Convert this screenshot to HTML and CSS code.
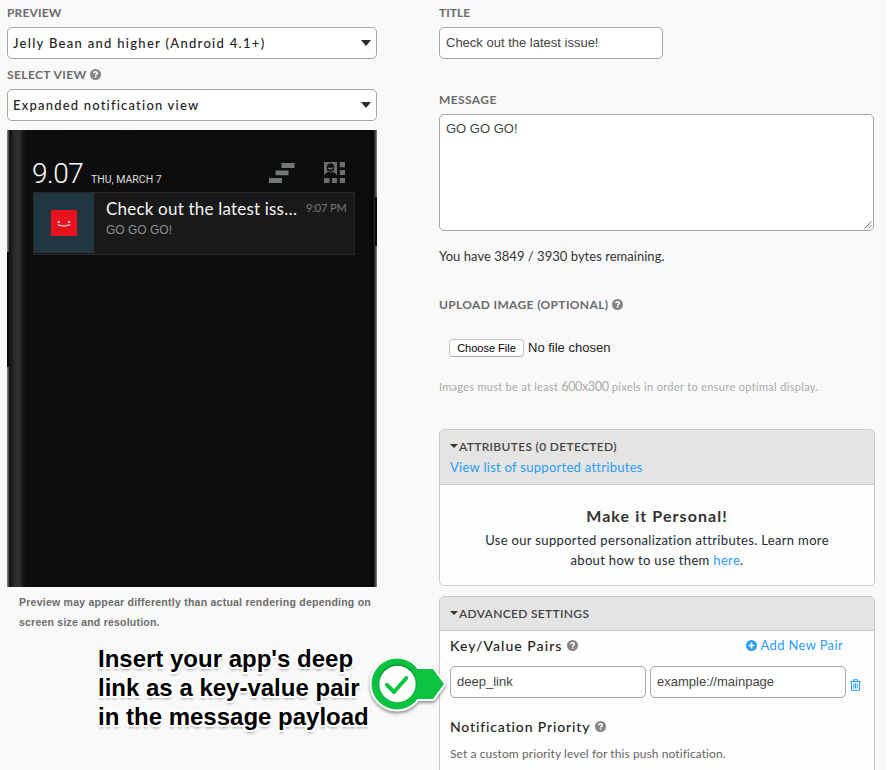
FILE: index.html
```
<!DOCTYPE html>
<html lang="en">
<head>
<meta charset="utf-8">
<title>Compose push notification</title>
<link rel="stylesheet" href="styles.css">
</head>
<body>
<svg class="sprite" aria-hidden="true">
  <symbol id="help" viewBox="0 0 12 12">
    <circle cx="6" cy="6" r="6" fill="#848484"/>
    <path d="M4 4.7C4.1 2.5 8 2.5 8 4.6C8 5.9 6.2 5.9 6.1 7.2" fill="none" stroke="#fff" stroke-width="1.6"/>
    <rect x="5.2" y="8" width="1.8" height="1.6" fill="#fff"/>
  </symbol>
</svg>
<main class="page">
  <section class="preview">
    <div class="label"><span class="t-preview">PREVIEW</span></div>
    <div class="select"><span class="t-jelly">Jelly Bean and higher (Android 4.1+)</span><i class="caret"></i></div>
    <div class="label label-view"><span class="t-view">SELECT VIEW</span><svg class="help"><use href="#help"/></svg></div>
    <div class="select"><span class="t-expanded">Expanded notification view</span><i class="caret"></i></div>
    <div class="phone">
      <i class="edge edge-left"></i><i class="edge edge-right"></i>
      <div class="status">
        <span class="clock">9.07</span>
        <span class="date">THU, MARCH 7</span>
        <svg class="clear" viewBox="0 0 26 20" fill="#757878"><path d="M12.5 0H25.5V5H12.5zM6.5 7.5H19.5V12.2H6.5zM0 15H13V20H0z"/></svg>
        <svg class="quick" viewBox="0 0 21 21">
          <path fill="#6b6e6e" d="M0 0H13V13H0zM15.8 0H21V5.3H15.8zM15.8 8H21V13H15.8zM0 16H5.5V21H0zM8 16H13V21H8zM15.8 16H21V21H15.8z"/>
          <path fill="#101010" d="M.8 13V11.8Q2.5 10.4 4.4 9.9Q2.6 8.2 2.8 5Q3.2 1.2 6.5 1.2Q9.8 1.2 10.2 5Q10.4 8.2 8.6 9.9Q10.5 10.4 12.2 11.8V13z"/>
          <path fill="#6b6e6e" d="M4 5.3Q6.5 6.6 9 5.3L8.8 7Q6.5 8.2 4.2 7zM4.3 8.8Q6.5 10.6 8.7 8.8V9.8Q6.5 11 4.3 9.8z"/>
        </svg>
      </div>
      <div class="notice">
        <div class="thumb">
          <svg class="smile" viewBox="0 0 26 26"><rect width="26" height="26" fill="#e8121c"/><circle cx="7.7" cy="12" r="1.1" fill="#fff"/><circle cx="18" cy="12" r="1.1" fill="#fff"/><path d="M6.7 14.8Q13 17.6 19 14.8" fill="none" stroke="#fff" stroke-width="1"/></svg>
        </div>
        <div class="notice-text">
          <div class="notice-title"><span class="t-ntitle">Check out the latest iss…</span></div>
          <div class="notice-body"><span class="t-nbody">GO GO GO!</span></div>
        </div>
        <span class="time">9:07 PM</span>
      </div>
    </div>
    <p class="note"><span class="t-note1">Preview may appear differently than actual rendering depending on</span><br><span class="t-note2">screen size and resolution.</span></p>
    <div class="callout">
      <p class="callout-text"><span class="t-c1">Insert your app's deep</span><br><span class="t-c2">link as a key-value pair</span><br><span class="t-c3">in the message payload</span></p>
      <svg class="pin" viewBox="0 0 80 60">
        <g stroke="#fff" stroke-width="4" stroke-linejoin="round" fill="#fff"><circle cx="29" cy="29" r="25.5"/><path d="M45 14H65L76 29L65 44H45z"/></g>
        <circle cx="29" cy="29" r="25.5" fill="#0bc341"/><path d="M45 14H65L76 29L65 44H45z" fill="#0bc341"/>
        <circle class="disc" cx="29.5" cy="29" r="18.2" fill="#fff"/>
        <path d="M19 29.8L26 37L38.3 23" fill="none" stroke="#0bc341" stroke-width="4" stroke-linecap="round" stroke-linejoin="round"/>
      </svg>
    </div>
  </section>

  <section class="form">
    <div class="label"><span class="t-title">TITLE</span></div>
    <div class="input title-input"><span class="t-issue">Check out the latest issue!</span></div>
    <div class="label label-message"><span class="t-message">MESSAGE</span></div>
    <div class="input message-input"><span class="t-go">GO GO GO!</span><svg class="grip" viewBox="0 0 8 8"><path d="M.5 7.5L7.5 .5M4 7.5L7.5 4" stroke="#666" stroke-width=".9"/></svg></div>
    <p class="bytes"><span class="t-bytes">You have 3849 / 3930 bytes remaining.</span></p>
    <div class="label label-upload"><span class="t-upload">UPLOAD IMAGE (OPTIONAL)</span><svg class="help"><use href="#help"/></svg></div>
    <div class="file"><span class="file-button"><span class="t-choose">Choose File</span></span><span class="t-nofile">No file chosen</span></div>
    <p class="hint"><span class="t-h1">Images must be at least </span><span class="t-h2">600x300</span><span class="t-h3"> pixels in order to ensure optimal display.</span></p>

    <div class="panel attributes">
      <div class="panel-head">
        <div class="panel-title"><i class="tri"></i><span class="t-attr">ATTRIBUTES (0 DETECTED)</span></div>
        <a class="link supported"><span class="t-supported">View list of supported attributes</span></a>
      </div>
      <div class="personal">
        <h2><span class="t-make">Make it Personal!</span></h2>
        <p><span class="t-p1">Use our supported personalization attributes. Learn more</span><br><span class="t-p2">about how to use them <a class="link">here</a>.</span></p>
      </div>
    </div>

    <div class="panel advanced">
      <div class="panel-head"><div class="panel-title"><i class="tri"></i><span class="t-adv">ADVANCED SETTINGS</span></div></div>
      <div class="advanced-body">
        <div class="row"><h3><span class="t-kv">Key/Value Pairs</span></h3><svg class="help"><use href="#help"/></svg>
          <a class="link add"><svg class="plus" viewBox="0 0 12 12"><circle cx="6" cy="6" r="6" fill="#2a9df4"/><path d="M6 2.8V9.2M2.8 6H9.2" stroke="#fff" stroke-width="1.8"/></svg><span class="t-add">Add New Pair</span></a></div>
        <div class="pair">
          <div class="input"><span class="t-deep">deep_link</span></div>
          <div class="input"><span class="t-example">example://mainpage</span></div>
          <svg class="trash" viewBox="0 0 11 12" fill="none" stroke="#2a9df4"><path d="M.3 2.5H10.7M3.5 2.5V.7H7.5V2.5M1.5 2.5V11.3H9.5V2.5M3.8 4.5V9.5M5.5 4.5V9.5M7.2 4.5V9.5"/></svg>
        </div>
        <div class="row priority"><h3><span class="t-np">Notification Priority</span></h3><svg class="help"><use href="#help"/></svg></div>
        <p class="priority-help"><span class="t-set">Set a custom priority level for this push notification.</span></p>
      </div>
    </div>
  </section>
</main>
</body>
</html>
```
FILE: styles.css
```
* { box-sizing: border-box; }
html, body { height: 770px; overflow: hidden; }
body { margin: 0; background: #fff; font-family: Lato, sans-serif; color: #333; }
p, h2, h3 { margin: 0; font-weight: normal; }
span { white-space: pre; }
.sprite { position: absolute; width: 0; height: 0; }
.page { display: flex; width: 887px; height: 770px; padding: 2px 12px 0 7px; gap: 62px; background: #f9f9f9; overflow: hidden; }
.preview { width: 370px; flex: none; }
.form { width: 436px; flex: none; }

.label { display: flex; align-items: center; height: 20px; margin-bottom: 5px; font-size: 12px; font-weight: 700; color: #6b6b6b; }
.help { width: 11px; height: 11px; margin-left: 4px; flex: none; }
.select, .input { display: flex; align-items: center; height: 32px; border: 1px solid #a5a5a5; border-radius: 5px; background: #fff; }
.select { justify-content: space-between; padding: 0 5px; font-size: 13px; font-weight: 500; color: #222; }
.caret { border: 5.5px solid transparent; border-top: 6px solid #2b2b2b; border-bottom: 0; }
.label-view { margin-top: 5px; }

.phone { position: relative; height: 457px; margin-top: 9px; padding: 28px 22px 0 26px; background: linear-gradient(90deg, #777 0 1px, #1c1c1c 2px, #151515 4px, #262626 6px, #303030 10px, #2c2c2c 13px, #161616 16px, #0d0d0d 20px, #0c0c0c 363px, #050505 366px, #333 368px, #888 370px); }
.edge { position: absolute; width: 2px; background: #0a0a0a; }
.edge-left { left: 0; top: 122px; height: 115px; }
.edge-right { right: 0; top: 67px; height: 49px; }
.status { display: flex; align-items: flex-start; height: 34px; }
.clock { width: 51px; margin-left: -1px; font: 300 28px/32px Roboto, sans-serif; letter-spacing: -.5px; color: #fff; }
.date { margin: 15px 0 0 8px; font: 10.5px/14px Roboto, sans-serif; color: #ddd; width: 71px; }
.clear { width: 26px; height: 20px; margin: 5px 0 0 107px; }
.quick { width: 21px; height: 21px; margin: 4px 0 0 29px; }
.notice { display: flex; height: 63px; border: 1px solid #292929; background: #191919; }
.thumb { display: flex; align-items: center; justify-content: center; width: 60px; height: 60px; background: #203741; }
.smile { width: 26px; height: 26px; }
.notice-text { width: 193px; margin-left: 12px; }
.notice-title { height: 30px; font-size: 17px; line-height: 31px; color: #f4f4f4; }
.notice-body { font: 12px/14px "Liberation Sans", sans-serif; color: #8f8f8f; }
.time { margin: 8px 0 0 7px; font-size: 11px; line-height: 13px; letter-spacing: -.15px; color: #777a7c; }
.note { margin: 5px 0 0 12px; font: bold 10.5px/20px "Liberation Sans", sans-serif; color: #6c6c6c; }
.callout { display: flex; margin: 12px 0 0 91px; }
.callout-text { width: 274px; flex: none; font: bold 24px/29px "Liberation Sans", sans-serif; color: #000; text-shadow: -2px 0 #fff, 2px 0 #fff, 0 -2px #fff, 0 2px #fff, -1.5px -1.5px #fff, 1.5px -1.5px #fff, -1.5px 1.5px #fff, 1.5px 1.5px #fff, 0 3px 3px #999; }
.pin { position: relative; z-index: 1; flex: none; width: 80px; height: 60px; margin: 11px 0 0 -4px; overflow: visible; filter: drop-shadow(0 2px 1.5px rgba(0,0,0,.4)); }
.disc { filter: drop-shadow(0 -1px 1px rgba(0,0,0,.4)); }

.input { padding: 0 6px; font: 13px/16px "Liberation Sans", sans-serif; color: #444; }
.title-input { width: 224px; }
.label-message { margin-top: 30px; }
.message-input { position: relative; width: 435px; height: 117px; align-items: flex-start; padding-top: 6px; }
.grip { position: absolute; right: 1px; bottom: 1px; width: 8px; height: 8px; }
.bytes { margin-top: 15px; font-size: 13px; line-height: 20px; }
.label-upload { margin: 28px 0 0; }
.file { display: flex; align-items: center; height: 18px; margin: 25px 0 0 10px; font: 13px/16px "Liberation Sans", sans-serif; color: #222; }
.file-button { display: flex; align-items: center; justify-content: center; width: 75px; height: 18px; margin-right: 4px; border: 1px solid #c3c3c3; border-bottom-color: #aaa; border-radius: 4px; background: #fff; font-size: 11px; color: #000; }
.hint { margin-top: 20px; font-size: 11px; line-height: 20px; color: #aaa; }
.t-h2 { font-size: 12.5px; letter-spacing: -.35px; }

.panel { width: 436px; border: 1px solid #cbcbcb; border-radius: 5px; background: #fdfdfd; overflow: hidden; }
.panel-head { padding: 6px 10px 0; border-bottom: 1px solid #cbcbcb; background: #e4e4e4; }
.panel-title { display: flex; align-items: center; height: 20px; font-size: 12px; font-weight: 600; color: #444; }
.tri { margin-right: 1px; border: 4px solid transparent; border-top: 4px solid #333; border-bottom: 0; }
.link { color: #2a9df4; }
.attributes { height: 157px; margin-top: 32px; }
.attributes .panel-head { height: 55px; }
.supported { display: block; margin-top: 1px; font-size: 13px; line-height: 21px; }
.personal { padding-top: 21px; text-align: center; font-size: 13px; line-height: 20px; color: #222b33; }
.personal h2 { height: 24px; font-size: 16px; font-weight: 700; line-height: 20px; color: #333; }
.advanced { height: 200px; margin-top: 10px; }
.advanced .panel-head { height: 34px; }
.advanced-body { padding: 4px 10px 0; }
.row { display: flex; align-items: center; height: 20px; }
.row h3 { font-size: 14px; font-weight: 500; color: #222; }
.row .help { margin-left: 5px; }
.add { display: flex; align-items: center; margin-left: auto; margin-right: 21px; font-size: 13px; }
.plus { width: 11px; height: 11px; margin-right: 4px; }
.pair { display: flex; gap: 4px; margin-top: 11px; }
.pair .input { width: 196px; }
.trash { width: 11px; height: 12px; margin-top: 13px; }
.priority { margin-top: 18px; }
.priority-help { margin-top: 8px; font-size: 12px; line-height: 20px; color: #666; }

.t-preview { letter-spacing: .15px; }
.t-view, .t-message { letter-spacing: .4px; }
.t-upload { letter-spacing: .35px; }
.t-attr, .t-adv { letter-spacing: .32px; }
.t-jelly { letter-spacing: 1.3px; }
.t-expanded { letter-spacing: 1.2px; }
.t-ntitle { letter-spacing: .2px; }
.t-bytes { letter-spacing: .03px; }
.t-supported, .t-h1 { letter-spacing: .28px; }
.t-h3 { letter-spacing: .33px; }
.t-p1, .t-p2 { letter-spacing: .34px; }
.t-make { letter-spacing: 1.08px; }
.t-kv { letter-spacing: 1.05px; }
.t-np { letter-spacing: .86px; }
.t-add { letter-spacing: .35px; }
.t-set { letter-spacing: .09px; }
.t-note1 { letter-spacing: .245px; }
.t-note2 { letter-spacing: .22px; }
```
